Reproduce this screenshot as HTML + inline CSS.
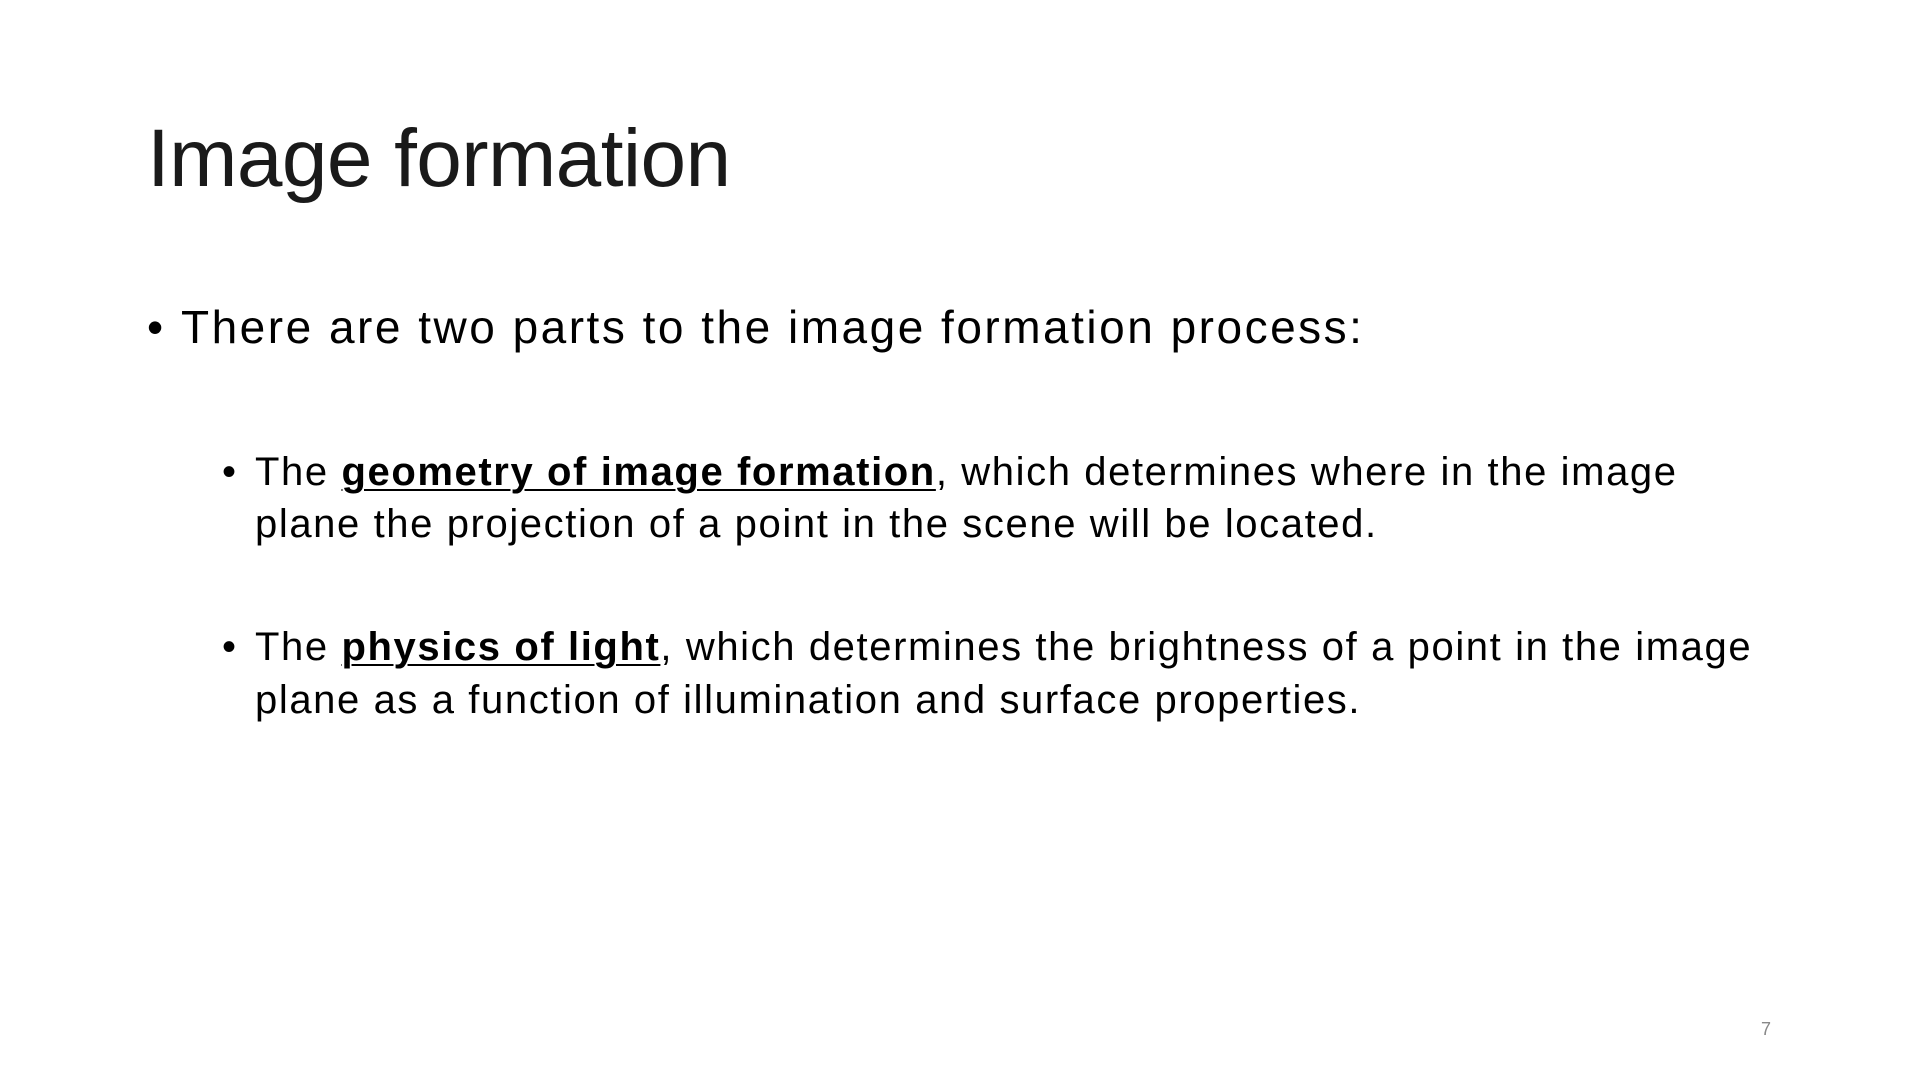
<!DOCTYPE html>
<html><head><meta charset="utf-8"><style>
html,body{margin:0;padding:0;background:#fff;}
body{width:1920px;height:1080px;position:relative;overflow:hidden;font-family:"Liberation Sans",sans-serif;color:#000;}
.t{position:absolute;line-height:1;white-space:nowrap;}
.s{letter-spacing:1.6px;}
u{text-decoration-thickness:2px;text-underline-offset:4px;}
</style></head><body>
<div class="t" style="left:147px;top:118px;font-size:82px;color:#1a1a1a;letter-spacing:-0.6px;">Image formation</div>
<div class="t" style="left:147px;top:304px;font-size:46px;">•</div>
<div class="t" style="left:181px;top:304px;font-size:46px;letter-spacing:2.5px;">There are two parts to the image formation process:</div>
<div class="t" style="left:222px;top:452px;font-size:40px;">•</div>
<div class="t s" style="left:255px;top:452px;font-size:40px;">The <b><u>geometry of image formation</u></b>, which determines where in the image</div>
<div class="t s" style="left:255px;top:504px;font-size:40px;">plane the projection of a point in the scene will be located.</div>
<div class="t" style="left:222px;top:627px;font-size:40px;">•</div>
<div class="t s" style="left:255px;top:627px;font-size:40px;">The <b><u>physics of light</u></b>, which determines the brightness of a point in the image</div>
<div class="t s" style="left:255px;top:680px;font-size:40px;">plane as a function of illumination and surface properties.</div>
<div class="t" style="left:1761px;top:1020px;font-size:18px;color:#888;">7</div>
</body></html>
